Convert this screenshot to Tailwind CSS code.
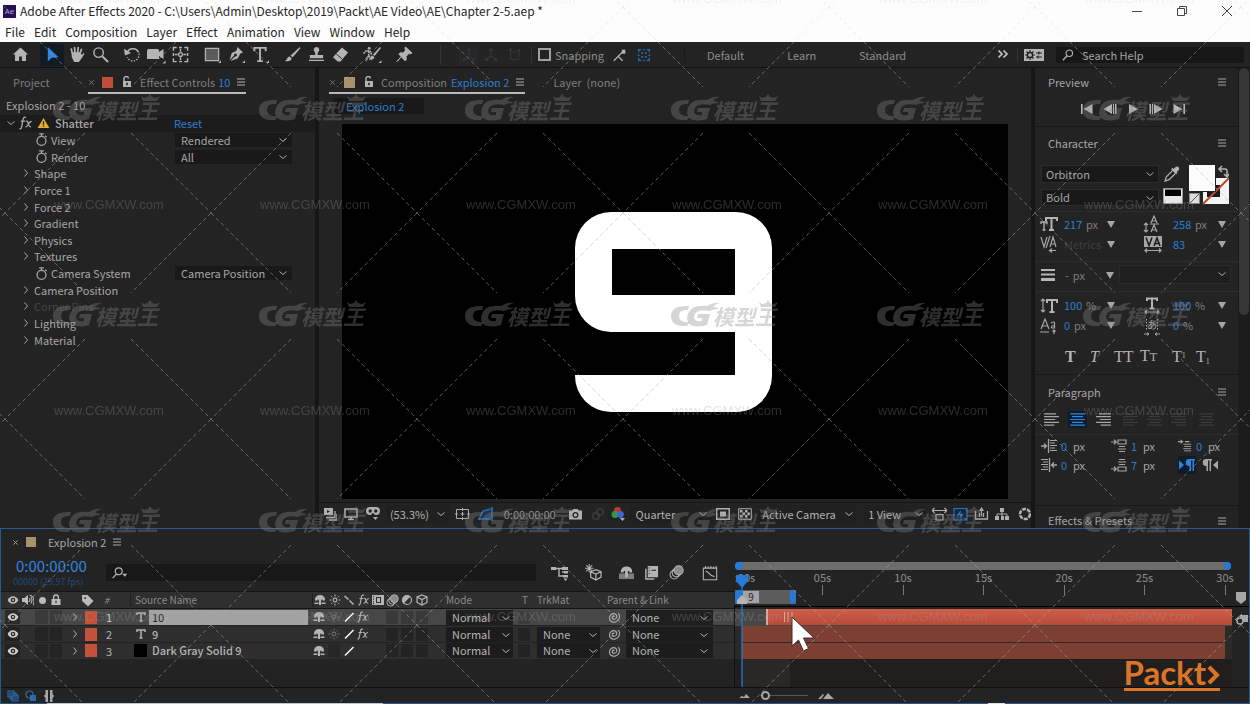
<!DOCTYPE html>
<html lang="en">
<head>
<meta charset="utf-8">
<title>Adobe After Effects 2020</title>
<script src="https://cdn.jsdelivr.net/npm/@tailwindcss/browser@4"></script>
</head>
<body class="bg-[#161616]">

<!-- Icon library -->
<svg class="hidden" aria-hidden="true">
  <symbol id="menu" viewBox="0 0 10 10"><path d="M1 2h8M1 5h8M1 8h8" stroke="currentColor" stroke-width="1.200"/></symbol>
  <symbol id="close" viewBox="0 0 8 8"><path d="M1.500 1.500l5 5M6.500 1.500l-5 5" stroke="currentColor"/></symbol>
  <symbol id="down" viewBox="0 0 10 10"><path d="M1.500 3.500L5 6.500l3.500-3" fill="none" stroke="currentColor"/></symbol>
  <symbol id="right" viewBox="0 0 10 10"><path d="M3.500 1.500L6.500 5l-3 3.500" fill="none" stroke="currentColor"/></symbol>
  <symbol id="tri" viewBox="0 0 8 8"><path d="M0 1h8L4 8z" fill="currentColor"/></symbol>
  <symbol id="lockopen" viewBox="0 0 12 12"><path d="M3 5V3.200a2 2 0 0 1 4.500-.8" fill="none" stroke="currentColor" stroke-width="1.400"/><path fill-rule="evenodd" d="M2 5h8v6H2zM5.200 6.800v2.400h1.600V6.800z" fill="currentColor"/></symbol>
  <symbol id="lock" viewBox="0 0 12 12"><path d="M3.700 5V3.300a2.300 2.300 0 0 1 4.600 0V5" fill="none" stroke="currentColor" stroke-width="1.400"/><path fill-rule="evenodd" d="M1.500 5h9v6h-9zM5.400 6.800v2.200h1.200V6.800z" fill="currentColor"/></symbol>
  <symbol id="home" viewBox="0 0 18 18"><path d="M9 1.500L1 9h2.200v7H7.500v-5h3v5h4.300V9H17z" fill="currentColor"/></symbol>
  <symbol id="arrow" viewBox="0 0 18 18"><path d="M4 1v15.500l4-4 7.500-.7z" fill="currentColor"/></symbol>
  <symbol id="hand" viewBox="0 0 18 18"><path d="M4.500 7.500L3.500 3.200M7.300 7L7 1.800M10.200 7l.6-5.200M12.700 8l1.500-4.500" stroke="currentColor" stroke-width="1.800" stroke-linecap="round"/><path d="M3.700 6.500h9.700l1 3 1.800-1.700c.9-.5 1.500.3 1 1L13 15l-1.500 2H6.500L4 12z" fill="currentColor"/></symbol>
  <symbol id="zoomer" viewBox="0 0 18 18"><circle cx="7" cy="7" r="5" fill="none" stroke="currentColor" stroke-width="1.500"/><path d="M11 11l6 6" stroke="currentColor" stroke-width="2.200"/></symbol>
  <symbol id="rotate" viewBox="0 0 18 18"><path d="M3 8.500A6.500 6.500 0 0 1 15.500 7" fill="none" stroke="currentColor" stroke-width="1.500"/><path d="M15.800 8a6.500 6.500 0 0 1-12.300 4" fill="none" stroke="currentColor" stroke-width="1.400" stroke-dasharray="1.500 1.500"/><path d="M0 3l1 7 6.500-2.500z" fill="currentColor"/></symbol>
  <symbol id="cam" viewBox="0 0 20 18"><path d="M1 4.500q0-1.500 1.500-1.500h9q1.500 0 1.500 1.500V6l4.500-3v10L13 10v3H1z" fill="currentColor"/><path d="M19.500 14.500v3h-3z" fill="currentColor"/></symbol>
  <symbol id="pan" viewBox="0 0 18 18"><path d="M1.500 5V1.500H5M7.500 1.500h3M13 1.500h3.500V5M16.500 7.500v3M16.500 13v3.500H13M10.500 16.500h-3M5 16.500H1.500V13M1.500 10.500v-3" fill="none" stroke="currentColor" stroke-width="1.500"/><circle cx="9" cy="9" r="2" fill="none" stroke="currentColor" stroke-width="1.400"/><path d="M9 3v3M9 12v3M3 9h3M12 9h3" stroke="currentColor" stroke-width="1.500"/></symbol>
  <symbol id="rect" viewBox="0 0 18 18"><path d="M1.500 2.500h14v13h-14z" fill="#5c5c5c" stroke="currentColor" stroke-width="1.300"/><path d="M18 15v3h-3z" fill="currentColor"/></symbol>
  <symbol id="pen" viewBox="0 0 18 18"><path d="M10 1l6 6-3 1-2.500 5L2.500 16 7.500 11a1.500 1.500 0 1 0-1-1L1.700 15 4 7.500l5-2.500z" fill="currentColor"/><path d="M18 15v3h-3z" fill="currentColor"/></symbol>
  <symbol id="type" viewBox="0 0 18 18"><path d="M2.500 5.500v-3.500h12v3.500M8.500 2v14M5.500 16h6" fill="none" stroke="currentColor" stroke-width="2"/><path d="M18 15v3h-3z" fill="currentColor"/></symbol>
  <symbol id="brush" viewBox="0 0 18 18"><path d="M16.800 1L7 10l2 2.200L17.300 2.500zM6 11c-3 0-2 3.500-5 4.500 3 1.500 7 .5 7-2.500z" fill="currentColor"/></symbol>
  <symbol id="stamp" viewBox="0 0 18 18"><path d="M9 1a3 3 0 0 1 2 5.200c-.7 1-.8 2-.7 3.300H16V13H2V9.500h5.700c.1-1.300 0-2.300-.7-3.300A3 3 0 0 1 9 1zM1 14.500h16V16H1z" fill="currentColor"/></symbol>
  <symbol id="eraser" viewBox="0 0 18 18"><path d="M10.500 1.500l6.500 5.500-8 9.500H6L1 12z" fill="currentColor"/><path d="M4.500 8.500l6 5" stroke="#232323"/></symbol>
  <symbol id="roto" viewBox="0 0 20 18"><circle cx="7" cy="2.500" r="1.500" fill="currentColor"/><path d="M1 8l3-3 4 .5 1.500 3.500M6.500 5.500V10l-3 6M6.500 10l3 5" fill="none" stroke="currentColor" stroke-width="1.700" stroke-dasharray="2 .6"/><path d="M18.500 1L11 9l1.700 1.700L19.500 2zM10.500 10c-2 0-1.500 3-4 4 3 1 6 0 6-2zM20 15v3h-3z" fill="currentColor"/></symbol>
  <symbol id="pin" viewBox="0 0 18 18"><path d="M10 1l7 6.500-2 .8-1.500-.4-2.800 3.200.2 3.400-1.500 1L3 8.500l1.300-1.300 3.500.2L10 4.500 9.500 2.500zM5.300 11.500L1 16.500z" fill="currentColor" stroke="currentColor"/></symbol>
  <symbol id="axis" viewBox="0 0 18 18"><path d="M9 2v8M9 10l-6 5M9 10l6 5M7 4l2-2.500L11 4M3 12v3h3M12 15h3v-3" fill="none" stroke="currentColor" stroke-width="1.500"/></symbol>
  <symbol id="axisbox" viewBox="0 0 18 18"><path d="M4 2v12h10M6 7l8-4-1 9M2 4l2-2 2 2" fill="none" stroke="currentColor" stroke-width="1.500"/></symbol>
  <symbol id="snap" viewBox="0 0 18 18"><path d="M2 15.500l5-5 5 5M7 10.500l5-5" fill="none" stroke="currentColor" stroke-width="1.500"/><path d="M11 3h4v4.500h-4z" fill="currentColor"/></symbol>
  <symbol id="snapgrid" viewBox="0 0 18 18"><path d="M3 6V3h3M12 3h3v3M15 12v3h-3M6 15H3v-3" fill="none" stroke="currentColor" stroke-width="1.500"/><path d="M6 6h2v2H6zM10 6h2v2h-2zM6 10h2v2H6zM10 10h2v2h-2zM8.500 2h1.500v2H8.500zM8.500 14h1.500v2H8.500zM2 8.500h2V10H2zM14 8.500h2V10h-2z" fill="currentColor"/></symbol>
  <symbol id="search" viewBox="0 0 14 14"><circle cx="8.500" cy="5" r="3.800" fill="none" stroke="currentColor" stroke-width="1.300"/><path d="M6 8l-5 5" stroke="currentColor" stroke-width="1.600"/></symbol>
  <symbol id="fx" viewBox="0 0 14 14"><path d="M7 1.500c-2.500-1-2.800 1-3.200 3.500L2.600 11c-.3 1.500-1 2-2.100 1.600M1.700 5.200h4.600M7 5.200c1.500-.5 1.700.5 2.500 3s1 2.800 2.500 2.500M12.800 5.300C11 5 10 7 9.200 8.500S7.700 11 6.500 11" fill="none" stroke="currentColor" stroke-width="1.300"/></symbol>
  <symbol id="warn" viewBox="0 0 14 12"><path d="M7 0l7 12H0z" fill="#e3ae35"/><path d="M7 4v4M7 9v1.500" stroke="#232323" stroke-width="1.500"/></symbol>
  <symbol id="watch" viewBox="0 0 14 14"><circle cx="7" cy="8.500" r="4.800" fill="none" stroke="currentColor" stroke-width="1.400"/><path d="M4.500 1h5M7 1v2.500M11 3l1.500 1.200" stroke="currentColor" stroke-width="1.400"/></symbol>
  <symbol id="eye" viewBox="0 0 12 10"><path fill-rule="evenodd" d="M6 1.200C3.500 1.200 1.500 3 .6 5 1.500 7 3.500 8.800 6 8.800S10.500 7 11.400 5C10.500 3 8.500 1.200 6 1.200zM6 2.700a2.300 2.300 0 1 1 0 4.600 2.300 2.300 0 0 1 0-4.600z" fill="currentColor"/><circle cx="6" cy="5" r="1" fill="currentColor"/></symbol>
  <symbol id="speaker" viewBox="0 0 12 12"><path d="M0 4h2.500L6 1v10L2.500 8H0z" fill="currentColor"/><path d="M7.500 4q1.300 2 0 4M9 2.500q2.300 3.500 0 7M7.500 1q6 1 4 10" fill="none" stroke="currentColor"/></symbol>
  <symbol id="tag" viewBox="0 0 12 12"><path fill-rule="evenodd" d="M1 1h5l5.500 5.500-5 5L1 6.500zM3 3v1.500h1.500V3z" fill="currentColor"/></symbol>
  <symbol id="shy" viewBox="0 0 12 12"><path d="M1 6.500V5.500a5 4.500 0 0 1 10 0v1H8.500V5.500h-1v1h-3v-1h-1v1zM5 6h2v5H5zM.5 8.500h4V10h-4zM7.500 8.500h4V10h-4z" fill="currentColor"/></symbol>
  <symbol id="sun" viewBox="0 0 12 12"><circle cx="6" cy="6" r="1.900" fill="none" stroke="currentColor" stroke-width="1.100"/><path d="M6 .5v2M6 9.500v2M.5 6h2M9.500 6h2M2.200 2.200l1.200 1.200M8.600 8.600l1.200 1.200M9.800 2.200L8.600 3.400M3.400 8.600L2.200 9.800" stroke="currentColor"/></symbol>
  <symbol id="slash" viewBox="0 0 12 12"><path d="M2 10.500L10.500 2" stroke="currentColor" stroke-width="1.400"/></symbol>
  <symbol id="backslash" viewBox="0 0 12 12"><path d="M1.500 2l4 3.500M6.500 6.500l4 4" stroke="currentColor" stroke-width="1.600"/></symbol>
  <symbol id="film" viewBox="0 0 12 12"><path fill-rule="evenodd" d="M0 1h12v10H0zM1 2v1.300h1V2zm0 2.500v1.300h1V4.500zM1 7v1.300h1V7zm0 2v1.200h1V9zM4 3v6h5V3zM5 4h3v4H5z" fill="currentColor"/></symbol>
  <symbol id="blur" viewBox="0 0 14 14"><circle cx="5" cy="9" r="4" fill="none" stroke="currentColor"/><circle cx="7" cy="7" r="4" fill="none" stroke="currentColor"/><circle cx="9" cy="5" r="4.200" fill="#8a8a8a" stroke="currentColor"/></symbol>
  <symbol id="adjust" viewBox="0 0 12 12"><circle cx="6" cy="6" r="4.500" fill="none" stroke="currentColor" stroke-width="1.200"/><path d="M9.200 2.800A4.500 4.500 0 0 0 2.800 9.200z" fill="currentColor"/></symbol>
  <symbol id="cube" viewBox="0 0 12 12"><path d="M6 1l5 2v5.500L6 11 1 8.500V3zM1 3l5 2.500L11 3M6 5.500V11" fill="none" stroke="currentColor" stroke-width="1.200"/></symbol>
  <symbol id="spiral" viewBox="0 0 14 14"><path d="M7.500 6.500c-1-1-2.500 0-2.200 1.500.5 2 4 1.500 4.500-1C10.200 4 7 2.800 4.500 4.300 2 6 1.800 9.500 4 11.300c2.500 1.800 6.500.8 8-2.300.8-2 .8-4-.5-6" fill="none" stroke="currentColor" stroke-width="1.100"/></symbol>
  <symbol id="flow" viewBox="0 0 18 16"><path d="M0 2h5v3H0z" fill="currentColor"/><path d="M4 3.500h8M8 3.500V11h6M11 7h3" fill="none" stroke="currentColor" stroke-width="1.400"/><path d="M11 2h6v3h-6zM13 6h4v2.500h-4zM12 10h5v2.500h-5zM12.500 13.500h4L14.500 16z" fill="currentColor"/></symbol>
  <symbol id="draft" viewBox="0 0 18 18"><path d="M4.500 0v9M0 4.500h9M1.300 1.300l6.400 6.400M7.700 1.300L1.300 7.700" stroke="currentColor" stroke-width="1.100"/><path d="M11.500 6l5.500 2.200v5.600L11.500 17 6 13.800V8.200zM6 8.200l5.500 2.500L17 8.200M11.500 10.700V17" fill="none" stroke="currentColor" stroke-width="1.300"/></symbol>
  <symbol id="shybig" viewBox="0 0 18 16"><path d="M1 9h16v6H1z" fill="#7d7d7d"/><path d="M3 8V6.500a6 5 0 0 1 12 0V8h-3V6.500h-1.500V13h-3V6.500H6V8z" fill="currentColor"/></symbol>
  <symbol id="blend" viewBox="0 0 16 16"><path d="M2 4v11h9" fill="none" stroke="currentColor" stroke-width="1.500"/><path fill-rule="evenodd" d="M4 1h11v12H4zM5 2.500v1.200h1V2.500zm0 3v1.200h1V5.500zm0 3v1.200h1V8.500zM8 5v1h5V5z" fill="currentColor"/></symbol>
  <symbol id="graph" viewBox="0 0 18 18"><path d="M1.500 3.500h15v13h-15zM4 1v2.500M7 1.800v1.700M10 1v2.500M13 1.800v1.700M16 1v2.500" fill="none" stroke="currentColor" stroke-width="1.200"/><path d="M4 7c4 0 4 6 10 6" fill="none" stroke="currentColor" stroke-width="1.300"/></symbol>
  <symbol id="play" viewBox="0 0 14 12"><path d="M3 1l9 5-9 5z" fill="currentColor"/></symbol>
  <symbol id="first" viewBox="0 0 14 12"><path d="M1 1h1.600v10H1zM12.500 1v10l-9-5z" fill="currentColor"/></symbol>
  <symbol id="last" viewBox="0 0 14 12"><path d="M11.400 1H13v10h-1.600zM1.500 1v10l9-5z" fill="currentColor"/></symbol>
  <symbol id="prev" viewBox="0 0 14 12"><path d="M9 1v10L.5 6zM10 1h1v10h-1zM12 1h1.500v10H12z" fill="currentColor"/></symbol>
  <symbol id="next" viewBox="0 0 14 12"><path d="M5 1v10l8.500-5zM3 1h1v10H3zM.5 1H2v10H.5z" fill="currentColor"/></symbol>
  <symbol id="lines" viewBox="0 0 16 14"><path d="M0 1h16M2 4h12M0 7h16M2 10h12M0 13h16" stroke="currentColor" stroke-width="1.300"/></symbol>
  <symbol id="linesL" viewBox="0 0 16 14"><path d="M0 1h13M0 4h16M0 7h12M0 10h16M0 13h11" stroke="currentColor" stroke-width="1.300"/></symbol>
  <symbol id="linesR" viewBox="0 0 16 14"><path d="M3 1h13M0 4h16M4 7h12M0 10h16M5 13h11" stroke="currentColor" stroke-width="1.300"/></symbol>
  <symbol id="indL" viewBox="0 0 16 14"><path d="M0 7h5M3 4.500L5.500 7 3 9.500M7.500 0v14" fill="none" stroke="currentColor" stroke-width="1.300"/><path d="M9 1.500h7M9 4h5M9 6.500h7M9 9h5M9 11.500h7" stroke="currentColor"/></symbol>
  <symbol id="indR" viewBox="0 0 16 14"><path d="M16 7h-5M13 4.500L10.500 7 13 9.500M8.500 0v14" fill="none" stroke="currentColor" stroke-width="1.300"/><path d="M0 1.500h7M2 4h5M0 6.500h7M2 9h5M0 11.500h7" stroke="currentColor"/></symbol>
  <symbol id="spB" viewBox="0 0 16 14"><path d="M0 3h5M3 .8L5.300 3 3 5.200M7 1h8v4H7z" fill="none" stroke="currentColor" stroke-width="1.200"/><path d="M8 7.500h6M7 10h8M8 12.500h6" stroke="currentColor"/></symbol>
  <symbol id="spA" viewBox="0 0 16 14"><path d="M0 11h5M3 8.800L5.300 11 3 13.200M7 9h8v4H7z" fill="none" stroke="currentColor" stroke-width="1.200"/><path d="M8 1.500h6M7 4h8M8 6.500h6" stroke="currentColor"/></symbol>
  <symbol id="indF" viewBox="0 0 16 14"><path d="M0 2h5M3 0l2.300 2L3 4M8 2h5" fill="none" stroke="currentColor" stroke-width="1.200"/><path d="M6 5h9M7 7.500h8M6 10h9M7 12.500h8" stroke="currentColor"/></symbol>
  <symbol id="drop" viewBox="0 0 18 18"><path d="M12 2.500c2-2.500 5.500.5 3.500 3l-2 2 .8.800-1.500 1.500L7.500 4.500 9 3l1 1.200z" fill="currentColor"/><path d="M9 6l-6.500 6.500L1 17l4.500-1.500L12 9" fill="none" stroke="currentColor" stroke-width="1.300"/></symbol>
</svg>

<div class="relative flex h-screen flex-col overflow-hidden font-['Noto_Sans_CJK_SC','Noto_Sans',sans-serif] text-[11px] leading-[16px] text-[#a6a6a6]">

  <!-- Title bar and menus -->
  <header class="shrink-0 bg-[#fdfdfd] text-[12px] text-[#262626]">
    <div class="flex h-[22px] items-center">
      <span class="ml-[3px] mr-1 flex size-[13px] items-center justify-center bg-[#24104c] font-['Open_Sans',sans-serif] text-[8px] text-[#b9a2f0]">Ae</span>
      <h1 class="whitespace-nowrap">Adobe After Effects 2020 - C:\Users\Admin\Desktop\2019\Packt\AE Video\AE\Chapter 2-5.aep *</h1>
      <div class="ml-auto flex gap-[31px] pr-4 text-[#444]">
        <button aria-label="Minimize"><svg class="size-[14px]" viewBox="0 0 14 14"><path d="M2 7.500h10" stroke="currentColor"/></svg></button>
        <button aria-label="Restore"><svg class="size-[14px]" viewBox="0 0 14 14"><path d="M2.500 4.500h7v7h-7zM4.500 4.500v-2h7v7h-2" fill="none" stroke="currentColor"/></svg></button>
        <button aria-label="Close"><svg class="size-[14px]" viewBox="0 0 14 14"><path d="M2 2l10 10M12 2L2 12" stroke="currentColor"/></svg></button>
      </div>
    </div>
    <nav class="flex h-5 items-center gap-[9px] pl-[5px]">
      <button>File</button><button>Edit</button><button>Composition</button><button>Layer</button><button>Effect</button><button>Animation</button><button>View</button><button>Window</button><button>Help</button>
    </nav>
  </header>

  <!-- Tools -->
  <div class="flex h-[26px] shrink-0 items-center gap-2 border-b border-[#111] bg-[#232323] pl-2 text-[#b4b4b4]">
    <button class="flex w-6 justify-center" aria-label="Home"><svg class="size-[17px]"><use href="#home"/></svg></button>
    <div class="flex items-center">
      <button class="flex h-[22px] w-6 items-center justify-center bg-[#121a24] text-[#2f86e0]" aria-label="Selection"><svg class="size-[17px]"><use href="#arrow"/></svg></button>
      <button class="flex w-6 justify-center" aria-label="Hand"><svg class="size-[17px]"><use href="#hand"/></svg></button>
      <button class="flex w-6 justify-center" aria-label="Zoom"><svg class="size-[17px]"><use href="#zoomer"/></svg></button>
    </div>
    <div class="flex">
      <button class="flex w-6 justify-center" aria-label="Rotation"><svg class="size-[17px]"><use href="#rotate"/></svg></button>
      <button class="flex w-6 justify-center" aria-label="Camera"><svg class="h-[18px] w-5"><use href="#cam"/></svg></button>
      <button class="flex w-6 justify-center" aria-label="Pan behind"><svg class="size-[17px]"><use href="#pan"/></svg></button>
    </div>
    <div class="flex">
      <button class="flex w-6 justify-center" aria-label="Rectangle"><svg class="size-[17px]"><use href="#rect"/></svg></button>
      <button class="flex w-6 justify-center" aria-label="Pen"><svg class="size-[17px]"><use href="#pen"/></svg></button>
      <button class="flex w-6 justify-center" aria-label="Type"><svg class="size-[17px]"><use href="#type"/></svg></button>
    </div>
    <div class="flex">
      <button class="flex w-6 justify-center" aria-label="Brush"><svg class="size-[17px]"><use href="#brush"/></svg></button>
      <button class="flex w-6 justify-center" aria-label="Clone stamp"><svg class="size-[17px]"><use href="#stamp"/></svg></button>
      <button class="flex w-6 justify-center" aria-label="Eraser"><svg class="size-[17px]"><use href="#eraser"/></svg></button>
    </div>
    <button class="flex w-6 justify-center" aria-label="Roto brush"><svg class="h-[17px] w-5"><use href="#roto"/></svg></button>
    <button class="flex w-6 justify-center" aria-label="Puppet pin"><svg class="size-[17px]"><use href="#pin"/></svg></button>
    <div class="ml-4 flex h-5 items-center border-l border-[#343434] pl-[18px] text-[#343434]">
      <span class="flex size-5 items-center justify-center bg-[#25252a]"><svg class="size-4"><use href="#axis"/></svg></span>
      <svg class="mr-2 ml-1 size-4"><use href="#axis"/></svg>
      <svg class="size-4"><use href="#axisbox"/></svg>
    </div>
    <label class="flex items-center gap-1 border-l border-[#343434] pl-1.5 text-[#8c8c8c]"><input type="checkbox" class="size-[13px] appearance-none border-2 border-[#a0a0a0]">Snapping</label>
    <button class="flex w-4 justify-center" aria-label="Snap edges"><svg class="size-4"><use href="#snap"/></svg></button>
    <button class="flex w-4 justify-center text-[#2b6cad]" aria-label="Snap grid"><svg class="size-[18px]"><use href="#snapgrid"/></svg></button>
    <nav class="ml-6 flex gap-[43px] border-l border-[#1a1a1a] pl-[22px] text-[#8c8c8c]">
      <button>Default</button><button>Learn</button><button>Standard</button>
    </nav>
    <button class="ml-auto" aria-label="More workspaces"><svg class="h-3 w-3 text-[#c4c4c4]" viewBox="0 0 12 12"><path d="M1.500 1.500L5 5 1.500 8.500M6.500 1.500L10 5 6.500 8.500" fill="none" stroke="currentColor" stroke-width="1.700"/></svg></button>
    <button class="border-l border-[#343434] pl-1.5" aria-label="Workspace settings"><svg class="h-3 w-5" viewBox="0 0 20 12"><path d="M0 0h20v12H0z" fill="currentColor"/><circle cx="6" cy="6" r="2.600" fill="none" stroke="#232323" stroke-width="1.500"/><path d="M6 1v2M6 9v2M1 6h2M9 6h2M2.500 2.500L4 4M8 8l1.500 1.500M9.500 2.500L8 4M4 8L2.500 9.500M12 4h6M12 8h6M15 2.500v3M14 6.500v3" stroke="#232323" stroke-width="1.200"/></svg></button>
    <label class="mr-1.5 ml-1 flex h-4 w-[188px] items-center gap-2 bg-[#171717] pl-1.5"><svg class="size-3 shrink-0"><use href="#search"/></svg><input type="text" class="w-full bg-transparent outline-none placeholder:text-[#a4a4a4]" placeholder="Search Help" aria-label="Search Help"></label>
  </div>

  <main class="flex min-h-0 flex-1 gap-1">
    <!-- Effect controls -->
    <section class="flex w-[315px] shrink-0 flex-col bg-[#232323]">
      <div class="flex h-7 items-center">
        <button class="w-[88px] pl-[13px] text-left text-[#7e7e7e]">Project</button>
        <div class="flex h-[26px] items-center self-start border-b-2 border-[#b8b8b8] pt-1 text-[#7e7e7e]">
          <button class="mr-1.5" aria-label="Close tab"><svg class="size-[7px]"><use href="#close"/></svg></button>
          <span class="mr-2 ml-px size-[11px] bg-[#bd4e38]"></span>
          <svg class="mr-[7px] size-3 text-[#b4b4b4]"><use href="#lockopen"/></svg>
          <span>Effect Controls</span><span class="ml-[3px] text-[#2d7cd0]">10</span>
          <button class="ml-1.5 text-[#b4b4b4]" aria-label="Panel menu"><svg class="size-[10px]"><use href="#menu"/></svg></button>
        </div>
      </div>
      <p class="h-[19px] pl-[6px] leading-[19px]">Explosion 2 - 10</p>
      <div class="grid h-[233px] auto-rows-fr items-stretch whitespace-nowrap">
        <div class="flex items-center bg-[#1c1c1c] pl-1.5"><svg class="mr-[3px] size-[10px]"><use href="#down"/></svg><svg class="mr-1 size-[14px]"><use href="#fx"/></svg><svg class="mr-[5px] h-[10px] w-[13px]"><use href="#warn"/></svg><span class="w-[119px] font-medium">Shatter</span><button class="text-[#2d7cd0]">Reset</button></div>
        <div class="flex items-center pl-[35px]"><svg class="mr-[3px] size-[13px]"><use href="#watch"/></svg><label for="view" class="w-[124px]">View</label><span class="relative flex w-[117px]"><select id="view" class="h-[14px] w-full appearance-none bg-[#191919] pl-1.5 leading-[14px]"><option>Rendered</option></select><svg class="pointer-events-none absolute top-0.5 right-1 size-[10px]"><use href="#down"/></svg></span></div>
        <div class="flex items-center pl-[35px]"><svg class="mr-[3px] size-[13px]"><use href="#watch"/></svg><label for="render" class="w-[124px]">Render</label><span class="relative flex w-[117px]"><select id="render" class="h-[14px] w-full appearance-none bg-[#191919] pl-1.5 leading-[14px]"><option>All</option></select><svg class="pointer-events-none absolute top-0.5 right-1 size-[10px]"><use href="#down"/></svg></span></div>
        <button class="flex items-center gap-[3px] pl-[21px]"><svg class="size-[10px]"><use href="#right"/></svg>Shape</button>
        <button class="flex items-center gap-[3px] pl-[21px]"><svg class="size-[10px]"><use href="#right"/></svg>Force 1</button>
        <button class="flex items-center gap-[3px] pl-[21px]"><svg class="size-[10px]"><use href="#right"/></svg>Force 2</button>
        <button class="flex items-center gap-[3px] pl-[21px]"><svg class="size-[10px]"><use href="#right"/></svg>Gradient</button>
        <button class="flex items-center gap-[3px] pl-[21px]"><svg class="size-[10px]"><use href="#right"/></svg>Physics</button>
        <button class="flex items-center gap-[3px] pl-[21px]"><svg class="size-[10px]"><use href="#right"/></svg>Textures</button>
        <div class="flex items-center pl-[35px]"><svg class="mr-[3px] size-[13px]"><use href="#watch"/></svg><label for="camsys" class="w-[124px]">Camera System</label><span class="relative flex w-[117px]"><select id="camsys" class="h-[14px] w-full appearance-none bg-[#191919] pl-1.5 leading-[14px]"><option>Camera Position</option></select><svg class="pointer-events-none absolute top-0.5 right-1 size-[10px]"><use href="#down"/></svg></span></div>
        <button class="flex items-center gap-[3px] pl-[21px]"><svg class="size-[10px]"><use href="#right"/></svg>Camera Position</button>
        <button class="flex items-center gap-[3px] pl-[21px]"><svg class="size-[10px]"><use href="#right"/></svg><span class="text-[#444]">Corner Pins</span></button>
        <button class="flex items-center gap-[3px] pl-[21px]"><svg class="size-[10px]"><use href="#right"/></svg>Lighting</button>
        <button class="flex items-center gap-[3px] pl-[21px]"><svg class="size-[10px]"><use href="#right"/></svg>Material</button>
      </div>
    </section>

    <!-- Composition viewer -->
    <section class="flex min-w-0 flex-1 flex-col overflow-hidden bg-[#232323]">
      <div class="flex h-7 shrink-0 items-center pl-[10px] text-[#7e7e7e]">
        <div class="flex h-[26px] items-center self-start border-b-2 border-[#b8b8b8] pt-1">
          <button class="mr-2" aria-label="Close tab"><svg class="size-[7px]"><use href="#close"/></svg></button>
          <span class="mr-2 size-[11px] bg-[#a8926c]"></span>
          <svg class="mr-1.5 size-3 text-[#b4b4b4]"><use href="#lockopen"/></svg>
          <span>Composition</span><span class="ml-1 text-[#2d7cd0]">Explosion 2</span>
          <button class="ml-1.5 text-[#b4b4b4]" aria-label="Panel menu"><svg class="size-[10px]"><use href="#menu"/></svg></button>
        </div>
        <button class="ml-7 whitespace-pre">Layer  (none)</button>
      </div>
      <div class="flex h-7 shrink-0 items-start pt-0.5 pl-[14px]"><a href="#" class="bg-[#181818] pr-5 pl-[13px] text-[#2d7cd0]">Explosion 2</a></div>
      <div class="flex min-h-0 flex-1 justify-center">
        <div class="flex aspect-video h-full items-center justify-center bg-black pr-1">
          <!-- Rendered figure nine -->
          <div role="img" aria-label="9" class="flex w-[197px] flex-col">
            <div class="h-[120px] rounded-tl-[36px] rounded-tr-[36px] rounded-bl-[36px] border-[37px] border-white"></div>
            <div class="h-[80px] rounded-br-[36px] rounded-bl-[36px] border-r-[37px] border-b-[37px] border-white"></div>
          </div>
        </div>
      </div>
      <div class="mt-[3px] flex h-[26px] shrink-0 items-center border-t border-[#151515] pb-[3px] text-[#b0b0b0]">
        <svg class="ml-1 h-[14px] w-[14px]" viewBox="0 0 14 14"><path d="M1 1h9v7H1z" fill="currentColor"/><path d="M4 3l3 1.500L4 6z" fill="#222"/><path d="M3 10.500h9V4M6 13h8V7" fill="none" stroke="currentColor" stroke-width="1.300"/></svg>
        <svg class="ml-[7px] size-[14px]" viewBox="0 0 14 14"><path d="M1 2h12v8H1zM4 12.500h6M7 10v2" fill="none" stroke="currentColor" stroke-width="1.500"/></svg>
        <svg class="ml-[7px] h-[16px] w-[16px]" viewBox="0 0 16 16"><path fill-rule="evenodd" d="M1 5a4 4 0 0 1 4-4h6a4 4 0 0 1 0 8c-2 0-2-2-3-2s-1 2-3 2a4 4 0 0 1-4-4zm2.500 0a1.700 1.700 0 1 0 3.400 0 1.700 1.700 0 0 0-3.400 0zm5.600 0a1.700 1.700 0 1 0 3.400 0 1.700 1.700 0 0 0-3.400 0zM8 11h5l-2.500 3z" fill="currentColor"/></svg>
        <span class="relative ml-[5px] flex w-16"><select aria-label="Magnification" class="h-[18px] w-full appearance-none bg-[#202020] pl-1 leading-[18px]"><option>(53.3%)</option></select><svg class="pointer-events-none absolute top-1 right-1 size-[10px]"><use href="#down"/></svg></span>
        <svg class="ml-[5px] size-[15px]" viewBox="0 0 15 15"><path d="M1.500 2.500h12v9h-12zM7.500 1v3M7.500 10v3M0 7h3M12 7h3M7.500 5v4M5.500 7h4" fill="none" stroke="currentColor"/></svg>
        <svg class="ml-2 size-[15px] text-[#2f6fb5]" viewBox="0 0 15 15"><path d="M1 12L5 4l9-2.500V12z" fill="#1c3350" stroke="currentColor" stroke-width="1.300"/><path d="M0 12h2M13 1h2v2h-2M13 11h2v2h-2" stroke="currentColor" stroke-width="1.500"/></svg>
        <button class="ml-[11px] text-[#8e8e8e]">0:00:00:00</button>
        <svg class="ml-3 h-[13px] w-[15px]" viewBox="0 0 15 13"><path fill-rule="evenodd" d="M1 2.500h3L5.500 1h4L11 2.500h3v9H1zM7.500 4a3 3 0 1 0 0 6 3 3 0 0 0 0-6z" fill="currentColor"/><circle cx="7.500" cy="7" r="1.700" fill="currentColor"/></svg>
        <svg class="ml-2 size-[14px] text-[#3c3c3c]" viewBox="0 0 14 14"><circle cx="5" cy="9" r="3.300" fill="none" stroke="currentColor" stroke-width="1.500"/><circle cx="9" cy="5" r="3.300" fill="none" stroke="currentColor" stroke-width="1.500"/></svg>
        <svg class="ml-1.5 h-4 w-[15px]" viewBox="0 0 15 16"><circle cx="6.500" cy="4.500" r="3.400" fill="#c8352c"/><circle cx="4" cy="8.500" r="3.400" fill="#2f9a3c"/><circle cx="9.500" cy="8.500" r="3.400" fill="#3767d6"/><path d="M9 12h5l-2.500 3z" fill="currentColor"/></svg>
        <span class="relative ml-1 flex w-[83px]"><select aria-label="Resolution" class="h-[18px] w-full appearance-none bg-[#202020] pl-1.5 leading-[18px]"><option>Quarter</option></select><svg class="pointer-events-none absolute top-1 right-1 size-[10px]"><use href="#down"/></svg></span>
        <svg class="ml-1 h-3 w-[14px]" viewBox="0 0 14 12"><path d="M.7.700h12.600v10.600H.7z" fill="none" stroke="currentColor" stroke-width="1.400"/><path d="M4 3.500h6v5H4z" fill="currentColor"/></svg>
        <svg class="ml-2 h-3 w-[14px]" viewBox="0 0 14 12"><path d="M.7.700h12.600v10.600H.7z" fill="none" stroke="currentColor"/><path d="M2 2h2.500v2.500H2zM7 2h2.500v2.500H7zM4.500 4.500H7V7H4.500zM9.500 4.500H12V7H9.500zM2 7h2.500v2.500H2zM7 7h2.500v2.500H7z" fill="currentColor"/></svg>
        <span class="relative ml-1.5 flex w-[98px]"><select aria-label="3D view" class="h-[18px] w-full appearance-none bg-[#202020] pl-1 leading-[18px]"><option>Active Camera</option></select><svg class="pointer-events-none absolute top-1 right-0.5 size-[10px]"><use href="#down"/></svg></span>
        <span class="relative ml-2 flex w-[64px]"><select aria-label="View layout" class="h-[18px] w-full appearance-none bg-[#202020] pl-1 leading-[18px]"><option>1 View</option></select><svg class="pointer-events-none absolute top-1 right-1 size-[10px]"><use href="#down"/></svg></span>
        <svg class="ml-1 size-[15px]" viewBox="0 0 15 15"><path d="M0 3.500h15M2.500 1L0 3.500 2.500 6M12.500 1L15 3.500 12.500 6M4 7.500h7V13H4z" fill="none" stroke="currentColor" stroke-width="1.200"/></svg>
        <svg class="ml-1.5 size-[15px] text-[#2f6fb5]" viewBox="0 0 15 15"><path d="M1 1.500h13V13H1z" fill="#152a42" stroke="currentColor" stroke-width="1.200"/><path d="M8 3L4 8h3l-1 4 4-5H7.500zM10 11h4v3z" fill="currentColor"/></svg>
        <svg class="ml-1.5 size-[15px]" viewBox="0 0 15 15"><path d="M1.500 4v8h12V4M5.500 6v4M9.500 6v4" fill="none" stroke="currentColor" stroke-width="1.300"/><path d="M5 4l2.500-4L10 4zM7 3h1v6H7z" fill="currentColor"/></svg>
        <svg class="ml-1.5 size-[14px]" viewBox="0 0 14 14"><path d="M5 1h4v4H5zM0 9h4v4H0zM10 9h4v4h-4zM6 9h3v4H6z" fill="currentColor"/><path d="M7 5v4M2 9V7h10v2" fill="none" stroke="currentColor"/></svg>
        <svg class="ml-2 size-[14px] shrink-0" viewBox="0 0 14 14"><circle cx="8" cy="7" r="5" fill="none" stroke="currentColor" stroke-width="2.500" stroke-dasharray="4 1"/></svg>
      </div>
    </section>

    <!-- Right dock -->
    <aside class="flex w-[215px] shrink-0 overflow-hidden bg-[#232323]">
      <div class="min-w-0 flex-1">
        <div class="flex h-7 items-center pr-[11px] pl-[13px]"><h2 class="flex-1">Preview</h2><svg class="size-[10px]"><use href="#menu"/></svg></div>
        <div class="flex h-[31px] justify-center gap-[9px] border-b border-[#191919] pt-[7px] pr-2 text-[#b8b8b8]">
          <button class="h-3" aria-label="First frame"><svg class="h-3 w-[14px]"><use href="#first"/></svg></button><button class="h-3" aria-label="Previous frame"><svg class="h-3 w-[14px]"><use href="#prev"/></svg></button><button class="h-3" aria-label="Play"><svg class="h-3 w-[14px]"><use href="#play"/></svg></button><button class="h-3" aria-label="Next frame"><svg class="h-3 w-[14px]"><use href="#next"/></svg></button><button class="h-3" aria-label="Last frame"><svg class="h-3 w-[14px]"><use href="#last"/></svg></button>
        </div>
        <div class="flex h-8 items-center pr-[11px] pl-[13px]"><h2 class="flex-1">Character</h2><svg class="size-[10px]"><use href="#menu"/></svg></div>

        <div class="flex gap-1 border-b border-[#2d2d2d] pt-1 pb-[5px] pl-1.5">
          <div class="flex flex-col gap-[6px] pt-0.5">
            <span class="relative flex w-[118px]"><select aria-label="Font family" class="h-[18px] w-full appearance-none border border-[#2b2b2b] bg-[#191919] pl-1 leading-[16px]"><option>Orbitron</option></select><svg class="pointer-events-none absolute top-1 right-1 size-[10px]"><use href="#down"/></svg></span>
            <span class="relative flex w-[118px]"><select aria-label="Font style" class="h-[17px] w-full appearance-none border border-[#2b2b2b] bg-[#191919] pl-1 leading-[15px]"><option>Bold</option></select><svg class="pointer-events-none absolute top-1 right-1 size-[10px]"><use href="#down"/></svg></span>
          </div>
          <svg class="h-[42px] w-[66px]" viewBox="0 0 66 42"><use href="#drop" x="1" y="2" width="17" height="17" class="text-[#b4b4b4]"/><path d="M.5 25.500h19v15h-19z" fill="#e8e8e8" stroke="#999"/><path d="M2 26.500h16v6.500H2z" fill="#000"/><path d="M40 15h26v26H40z" fill="#f4f4f4"/><path d="M44 22h13v12H44z" fill="#191919"/><path d="M40 41L66 15" stroke="#b84a30" stroke-width="2"/><path d="M25.500 1.500h27v27h-27z" fill="#fcfcfc" stroke="#222"/><path d="M26.500 30.500h10v10h-10z" fill="#ddd" stroke="#888"/><path d="M27 40l9-9" stroke="#555"/><path d="M57 6h5q2 0 2 2v5M59 3l-3 3 3 3M61 11l3 3 2-3" fill="none" stroke="#b4b4b4" stroke-width="1.500"/></svg>
        </div>

        <div class="grid auto-rows-[20px] grid-cols-[24px_22px_17px_40px_30px_22px_19px_16px] items-center border-b border-[#2d2d2d] pt-0.5 pb-[7px] pl-[5px] [&_input]:w-full [&_input]:bg-transparent [&_input]:text-[#2d7cd0]">
          <svg class="h-4 w-[18px]" viewBox="0 0 18 16"><path d="M1 8V6h6v2M4 6v8M2.500 14h3" fill="none" stroke="#b4b4b4" stroke-width="1.300"/><path d="M6 5V2h11v3M11.500 2v12M9 14h5" fill="none" stroke="#b4b4b4" stroke-width="2"/></svg>
          <input aria-label="Font size" value="217"><span class="text-[#7e7e7e]">px</span><svg class="m-1 size-2"><use href="#tri"/></svg>
          <svg class="h-[18px] w-[18px]" viewBox="0 0 18 18"><path d="M3 8v9M1 10l2-2 2 2M1 15l2 2 2-2M8 8l3-7 3 7M9 6h4M8 17l3-7 3 7M9 15h4M7 9h9" fill="none" stroke="#a6a6a6" stroke-width="1.200"/></svg>
          <input aria-label="Leading" value="258"><span class="text-[#7e7e7e]">px</span><svg class="m-1 size-2"><use href="#tri"/></svg>

          <svg class="h-[18px] w-[18px]" viewBox="0 0 18 18"><path d="M1 2l3 10 3-10M10 12l3-10 3 10M11 9h4M10 1L6 13M16 15.500h-6M12 13.500l-2.500 2 2.500 2" fill="none" stroke="#a6a6a6" stroke-width="1.200"/></svg>
          <span class="col-span-2 text-[#3e3e3e]">Metrics</span><svg class="m-1 size-2"><use href="#tri"/></svg>
          <svg class="h-[18px] w-[20px]" viewBox="0 0 20 18"><path d="M1 1h18v11H1z" fill="#a6a6a6"/><path d="M3 2.500l3 8 3-8M11 11l3-8 3 8M12 8.500h4" fill="none" stroke="#1c1c1c" stroke-width="1.500"/><path d="M2 15.500h16M4 13.500l-2 2 2 2M16 13.500l2 2-2 2" fill="none" stroke="#a6a6a6" stroke-width="1.200"/></svg>
          <input aria-label="Tracking" value="83"><span></span><svg class="m-1 size-2"><use href="#tri"/></svg>
        </div>

        <div class="grid grid-cols-[24px_37px_15px_1fr] items-center border-b border-[#2d2d2d] pt-[3px] pb-[7px] pr-[7px] pl-[6px]">
          <svg class="h-3 w-[14px]" viewBox="0 0 14 12"><path d="M0 1h14M0 5.500h14" stroke="#b4b4b4" stroke-width="2"/><path d="M0 10.500h14" stroke="#b4b4b4" stroke-width="3"/></svg>
          <span class="text-[#7e7e7e]"><span class="mr-1">-</span>px</span><svg class="ml-1 size-2"><use href="#tri"/></svg>
          <span class="relative ml-0.5 flex"><select aria-label="Stroke order" class="h-[19px] w-full appearance-none border border-[#2b2b2b] bg-[#1f1f1f]"><option></option></select><svg class="pointer-events-none absolute top-1 right-1 size-[10px]"><use href="#down"/></svg></span>
        </div>

        <div class="grid auto-rows-[20px] grid-cols-[24px_22px_17px_40px_30px_22px_19px_16px] items-center pt-[3px] pl-[5px] [&_input]:w-full [&_input]:bg-transparent [&_input]:text-[#2d7cd0]">
          <svg class="h-[17px] w-[18px]" viewBox="0 0 18 17"><path d="M3 2v13M1 4l2-2 2 2M1 13l2 2 2-2" fill="none" stroke="#a6a6a6" stroke-width="1.200"/><path d="M7 6V3h10v3M12 3v12M9.500 15h5" fill="none" stroke="#b4b4b4" stroke-width="2"/></svg>
          <input aria-label="Vertical scale" value="100"><span class="text-[#7e7e7e]">%</span><svg class="m-1 size-2"><use href="#tri"/></svg>
          <svg class="h-[17px] w-[18px]" viewBox="0 0 18 17"><path d="M4 4V1.500h10V4M9 1.500v10M6.500 11.500h5" fill="none" stroke="#b4b4b4" stroke-width="2"/><path d="M2 15h14M4 13l-2 2 2 2M14 13l2 2-2 2" fill="none" stroke="#a6a6a6" stroke-width="1.200"/></svg>
          <input aria-label="Horizontal scale" value="100"><span class="text-[#7e7e7e]">%</span><svg class="m-1 size-2"><use href="#tri"/></svg>
          <svg class="h-[17px] w-[18px]" viewBox="0 0 18 17"><path d="M1 12L5 2l4 10M2.500 9h5M0 15h9M11 6q3-2 3.500 0v5h-2.500q-2-2 2.500-2.500M14 17v-4M12.500 14.500L14 13l1.500 1.500" fill="none" stroke="#a6a6a6" stroke-width="1.200"/></svg>
          <span class="col-span-2 flex"><input aria-label="Baseline shift" value="0" class="max-w-[10px]"><span class="text-[#7e7e7e]">px</span></span><svg class="m-1 size-2"><use href="#tri"/></svg>
          <span class="relative flex w-[18px] justify-center"><span class="text-[10px] leading-[14px]">あ</span><svg class="absolute inset-0 h-[18px] w-[18px]" viewBox="0 0 18 18"><path d="M3.500 1v12M14.500 1v12" stroke="#a6a6a6" stroke-dasharray="1.500 1.500"/><path d="M1 16h5M4 14.500L6 16l-2 1.500M17 16h-5M14 14.500L12 16l2 1.500" fill="none" stroke="#a6a6a6"/></svg></span>
          <span class="col-span-2 flex"><input aria-label="Tsume" value="0" class="max-w-[10px]"><span class="text-[#7e7e7e]">%</span></span><svg class="m-1 size-2"><use href="#tri"/></svg>
        </div>

        <div class="mt-1 flex h-9 items-center border-b border-[#191919] pl-[30px] font-['Liberation_Serif',serif] text-[16px] text-[#b4b4b4]">
          <button class="w-[25px] text-left font-bold" aria-label="Faux bold">T</button><button class="w-6 text-left italic" aria-label="Faux italic">T</button><button class="w-[26px] text-left" aria-label="All caps">TT</button><button class="w-[32px] text-left" aria-label="Small caps">T<span class="text-[12px]">T</span></button><button class="w-[24px] text-left" aria-label="Superscript">T<sup class="text-[8px]">1</sup></button><button aria-label="Subscript">T<sub class="text-[8px]">1</sub></button>
        </div>

        <div class="flex h-[33px] items-center pr-[11px] pl-[13px]"><h2 class="flex-1">Paragraph</h2><svg class="size-[10px]"><use href="#menu"/></svg></div>
        <div class="flex h-[27px] items-center gap-[9px] border-b border-[#2d2d2d] pb-1 pl-[9px]">
          <button aria-label="Align left"><svg class="h-[13px] w-[15px]"><use href="#linesL"/></svg></button>
          <button class="bg-[#101c2c] p-0.5 text-[#2f86e0]" aria-label="Align center"><svg class="h-[13px] w-[15px]"><use href="#lines"/></svg></button>
          <button class="mr-[3px]" aria-label="Align right"><svg class="h-[13px] w-[15px]"><use href="#linesR"/></svg></button>
          <svg class="h-[13px] w-[15px] text-[#3a3a3a]"><use href="#linesL"/></svg><svg class="h-[13px] w-[15px] text-[#3a3a3a]"><use href="#lines"/></svg><svg class="h-[13px] w-[15px] text-[#3a3a3a]"><use href="#linesR"/></svg><svg class="ml-1 h-[13px] w-[15px] text-[#3a3a3a]"><use href="#lines"/></svg>
        </div>
        <div class="grid h-[71px] auto-rows-[19px] grid-cols-[70px_67px_1fr] content-start border-b border-[#191919] pt-px pl-1.5 [&_input]:w-2 [&_input]:bg-transparent [&_input]:text-[#2d7cd0]">
          <span class="flex items-center gap-1"><svg class="h-[14px] w-4"><use href="#indL"/></svg><input aria-label="Indent left" value="0">px</span>
          <span class="flex items-center gap-1"><svg class="h-[14px] w-4"><use href="#spB"/></svg><input aria-label="Space before" value="1">px</span>
          <span class="flex items-center gap-1"><svg class="h-[14px] w-[14px]"><use href="#indF"/></svg><input aria-label="First line indent" value="0">px</span>
          <span class="flex items-center gap-1"><svg class="h-[14px] w-4"><use href="#indR"/></svg><input aria-label="Indent right" value="0">px</span>
          <span class="flex items-center gap-1"><svg class="h-[14px] w-4"><use href="#spA"/></svg><input aria-label="Space after" value="7">px</span>
          <span class="flex items-center gap-1.5"><button class="flex size-[18px] items-center justify-center bg-[#101c2c] text-[#2f86e0]" aria-label="Left to right"><svg class="h-3 w-4" viewBox="0 0 16 12"><path d="M0 1.500L5 6 0 10.500zM10 0h6v1.500h-1V12h-1.500V1.500H12V12h-1.500V7a3.500 3.500 0 0 1-.5-7z" fill="currentColor"/></svg></button><button aria-label="Right to left"><svg class="h-3 w-4" viewBox="0 0 16 12"><path d="M16 1.500L11 6l5 4.500zM4 0h6v1.500H9V12H7.500V1.500H6V12H4.500V7A3.500 3.500 0 0 1 4 0z" fill="currentColor"/></svg></button></span>
        </div>
        <div class="flex h-[22px] items-end pr-[11px] pl-[13px]"><h2 class="flex-1">Effects &amp; Presets</h2><svg class="mb-0.5 size-[10px]"><use href="#menu"/></svg></div>
      </div>
      <div class="w-3 bg-[#1c1c1c]"><div class="ml-px h-[247px] w-[10px] rounded-full bg-[#363636]"></div></div>
    </aside>
  </main>

  <!-- Timeline -->
  <section class="flex h-[176px] shrink-0 flex-col border border-[#27598f] bg-[#232323]">
    <div class="flex min-h-0 flex-1">
      <div class="flex w-[733px] shrink-0 flex-col">
        <div class="flex h-[26px] items-center pl-[11px]">
          <button class="mr-[7px]" aria-label="Close tab"><svg class="size-[7px]"><use href="#close"/></svg></button>
          <span class="mr-3 size-[10px] bg-[#a8926c]"></span><span>Explosion 2</span><svg class="ml-1.5 size-[10px]"><use href="#menu"/></svg>
        </div>
        <div class="flex h-9 items-start">
          <div class="w-[105px] pl-3"><p class="pl-[3px] text-[15px] leading-[22px] text-[#2f86e0]">0:00:00:00</p><p class="text-[9px] leading-[9px] text-[#1f4a78]">00000 (29.97 fps)</p></div>
          <label class="mt-[9px] flex h-[17px] w-[430px] items-center bg-[#181818] pl-1.5"><svg class="h-3 w-4 shrink-0" viewBox="0 0 18 14"><circle cx="7.500" cy="5" r="4" fill="none" stroke="#b4b4b4" stroke-width="1.400"/><path d="M5 8l-4.500 5" stroke="#b4b4b4" stroke-width="1.600"/><path d="M11.500 8h6l-3 3.500z" fill="#b4b4b4"/></svg><input type="text" class="w-full bg-transparent outline-none" aria-label="Search layers"></label>
          <div class="mt-[9px] ml-[15px] flex items-center text-[#b4b4b4]">
            <svg class="mr-4 h-4 w-[18px]"><use href="#flow"/></svg><svg class="mr-4 size-[17px]"><use href="#draft"/></svg><svg class="mr-[9px] h-[15px] w-[17px]"><use href="#shybig"/></svg><svg class="mr-[10px] size-[15px]"><use href="#blend"/></svg><svg class="mr-[18px] size-[15px]"><use href="#blur"/></svg><svg class="size-4"><use href="#graph"/></svg>
          </div>
        </div>
        <table class="w-full table-fixed border-collapse text-left [&_td]:p-0 [&_th]:p-0 [&_th]:font-normal">
          <colgroup><col class="w-[19px]"><col class="w-[15px]"><col class="w-[15px]"><col class="w-[14px]"><col class="w-[17px]"><col class="w-[19px]"><col class="w-[30px]"><col class="w-[182px]"><col class="w-[134px]"><col class="w-[72px]"><col class="w-[19px]"><col class="w-[70px]"><col></colgroup>
          <thead>
            <tr class="h-[17px] border-y border-[#151515] bg-[#2f2f2f] text-[10px] leading-[14px] text-[#8a8a8a]">
              <th><svg class="ml-1.5 h-[10px] w-3 text-[#bbb]" aria-label="Video"><use href="#eye"/></svg></th>
              <th><svg class="ml-0.5 size-3 text-[#bbb]" aria-label="Audio"><use href="#speaker"/></svg></th>
              <th><span class="ml-1 block size-[7px] rounded-full bg-[#bbb]"></span></th>
              <th><svg class="size-3 text-[#bbb]" aria-label="Lock"><use href="#lock"/></svg></th>
              <th></th>
              <th><svg class="size-[13px] text-[#bbb]" aria-label="Label"><use href="#tag"/></svg></th>
              <th class="italic"><span class="pl-1 text-[9px]">#</span></th>
              <th><span class="border-l border-[#1f1f1f] pl-1">Source Name</span></th>
              <th><div class="mr-[17px] grid grid-cols-8 justify-items-center border-l border-[#1f1f1f] text-[#b4b4b4]"><svg class="size-3"><use href="#shy"/></svg><svg class="size-3"><use href="#sun"/></svg><svg class="size-3"><use href="#backslash"/></svg><svg class="size-3"><use href="#fx"/></svg><svg class="size-3"><use href="#film"/></svg><svg class="size-[13px]"><use href="#blur"/></svg><svg class="size-3"><use href="#adjust"/></svg><svg class="size-3"><use href="#cube"/></svg></div></th>
              <th>Mode</th><th><span class="pl-1">T</span></th><th>TrkMat</th><th>Parent &amp; Link</th>
            </tr>
          </thead>
          <tbody class="leading-[14px] text-[#b4b4b4]">
            <tr class="h-[17px] border-b border-[#222] bg-[#474747]">
              <td><span class="ml-1 flex h-[14px] w-[15px] items-center justify-center bg-[#2a2a2a]"><svg class="h-[10px] w-3 text-[#ccc]"><use href="#eye"/></svg></span></td><td></td>
              <td><span class="block h-[14px] w-[13px] bg-[#3a3a3a]"></span></td><td><span class="block h-[14px] w-[12px] bg-[#3a3a3a]"></span></td>
              <td><svg class="ml-1.5 size-[10px]"><use href="#right"/></svg></td><td><span class="ml-1 block h-[13px] w-3 bg-[#c4523a]"></span></td><td><span class="pl-[6px] text-[#ccc]">1</span></td>
              <td><div class="flex h-[15px] w-[178px] items-center"><svg class="mr-[3px] ml-1.5 size-[10px]" viewBox="0 0 10 10"><path d="M1 3V1h8v2M5 1v8M3.500 9h3" fill="none" stroke="currentColor" stroke-width="1.500"/></svg><span class="h-[15px] flex-1 bg-[#a3a3a3] pl-[3px] leading-[15px] text-[#222]">10</span></div></td>
              <td><div class="mr-[17px] grid grid-cols-8 items-center justify-items-center"><svg class="size-3"><use href="#shy"/></svg><svg class="size-3 text-[#6e6e6e]"><use href="#sun"/></svg><svg class="size-3 text-white"><use href="#slash"/></svg><svg class="size-3"><use href="#fx"/></svg><i></i><i class="h-[13px] w-3 bg-[#393939]"></i><i class="h-[13px] w-3 bg-[#393939]"></i><i class="h-[13px] w-3 bg-[#393939]"></i></div></td>
              <td><span class="relative flex w-[67px]"><select aria-label="Mode of layer 1" class="h-[15px] w-full appearance-none bg-[#1f1f1f] pl-1.5 leading-[15px]"><option>Normal</option></select><svg class="pointer-events-none absolute top-[3px] right-0.5 size-[10px]"><use href="#down"/></svg></span></td>
              <td><i class="block h-[13px] w-3 bg-[#3c3c3c]"></i></td><td></td>
              <td><div class="flex items-center"><svg class="mr-[5px] size-[14px]"><use href="#spiral"/></svg><span class="relative flex w-[87px]"><select aria-label="Parent of layer 1" class="h-[15px] w-full appearance-none bg-[#1f1f1f] pl-1.5 leading-[15px]"><option>None</option></select><svg class="pointer-events-none absolute top-[3px] right-1 size-[10px]"><use href="#down"/></svg></span></div></td>
            </tr>
            <tr class="h-[17px] border-b border-[#222] bg-[#2e2e2e]">
              <td><span class="ml-1 flex h-[14px] w-[15px] items-center justify-center bg-[#222]"><svg class="h-[10px] w-3 text-[#ccc]"><use href="#eye"/></svg></span></td><td></td>
              <td><span class="block h-[14px] w-[13px] bg-[#242424]"></span></td><td><span class="block h-[14px] w-[12px] bg-[#242424]"></span></td>
              <td><svg class="ml-1.5 size-[10px]"><use href="#right"/></svg></td><td><span class="ml-1 block h-[13px] w-3 bg-[#c4523a]"></span></td><td><span class="pl-[6px]">2</span></td>
              <td><div class="flex h-[15px] w-[178px] items-center"><svg class="mr-[3px] ml-1.5 size-[10px]" viewBox="0 0 10 10"><path d="M1 3V1h8v2M5 1v8M3.500 9h3" fill="none" stroke="currentColor" stroke-width="1.500"/></svg><span class="pl-[3px] leading-[15px] font-medium">9</span></div></td>
              <td><div class="mr-[17px] grid grid-cols-8 items-center justify-items-center"><svg class="size-3"><use href="#shy"/></svg><svg class="size-3 text-[#6e6e6e]"><use href="#sun"/></svg><svg class="size-3 text-white"><use href="#slash"/></svg><svg class="size-3"><use href="#fx"/></svg><i></i><i class="h-[13px] w-3 bg-[#232323]"></i><i class="h-[13px] w-3 bg-[#232323]"></i><i class="h-[13px] w-3 bg-[#232323]"></i></div></td>
              <td><span class="relative flex w-[67px]"><select aria-label="Mode of layer 2" class="h-[15px] w-full appearance-none bg-[#1c1c1c] pl-1.5 leading-[15px]"><option>Normal</option></select><svg class="pointer-events-none absolute top-[3px] right-0.5 size-[10px]"><use href="#down"/></svg></span></td>
              <td><i class="block h-[13px] w-3 bg-[#232323]"></i></td>
              <td><span class="relative flex w-[63px]"><select aria-label="Track matte of layer 2" class="h-[15px] w-full appearance-none bg-[#1c1c1c] pl-1.5 leading-[15px]"><option>None</option></select><svg class="pointer-events-none absolute top-[3px] right-0.5 size-[10px]"><use href="#down"/></svg></span></td>
              <td><div class="flex items-center"><svg class="mr-[5px] size-[14px]"><use href="#spiral"/></svg><span class="relative flex w-[87px]"><select aria-label="Parent of layer 2" class="h-[15px] w-full appearance-none bg-[#1c1c1c] pl-1.5 leading-[15px]"><option>None</option></select><svg class="pointer-events-none absolute top-[3px] right-1 size-[10px]"><use href="#down"/></svg></span></div></td>
            </tr>
            <tr class="h-4 bg-[#2e2e2e]">
              <td><span class="ml-1 flex h-[14px] w-[15px] items-center justify-center bg-[#222]"><svg class="h-[10px] w-3 text-[#ccc]"><use href="#eye"/></svg></span></td><td></td>
              <td><span class="block h-[14px] w-[13px] bg-[#242424]"></span></td><td><span class="block h-[14px] w-[12px] bg-[#242424]"></span></td>
              <td><svg class="ml-1.5 size-[10px]"><use href="#right"/></svg></td><td><span class="ml-1 block h-[13px] w-3 bg-[#c4523a]"></span></td><td><span class="pl-[6px]">3</span></td>
              <td><div class="flex h-[15px] w-[178px] items-center"><span class="mr-[5px] ml-1 size-[13px] bg-black"></span><span class="leading-[15px] font-medium whitespace-nowrap">Dark Gray Solid 9</span></div></td>
              <td><div class="mr-[17px] grid grid-cols-8 items-center justify-items-center"><svg class="size-3"><use href="#shy"/></svg><i class="h-[13px] w-3 bg-[#262626]"></i><svg class="size-3 text-white"><use href="#slash"/></svg><i></i><i></i><i class="h-[13px] w-3 bg-[#232323]"></i><i class="h-[13px] w-3 bg-[#232323]"></i><i class="h-[13px] w-3 bg-[#232323]"></i></div></td>
              <td><span class="relative flex w-[67px]"><select aria-label="Mode of layer 3" class="h-[15px] w-full appearance-none bg-[#1c1c1c] pl-1.5 leading-[15px]"><option>Normal</option></select><svg class="pointer-events-none absolute top-[3px] right-0.5 size-[10px]"><use href="#down"/></svg></span></td>
              <td><i class="block h-[13px] w-3 bg-[#232323]"></i></td>
              <td><span class="relative flex w-[63px]"><select aria-label="Track matte of layer 3" class="h-[15px] w-full appearance-none bg-[#1c1c1c] pl-1.5 leading-[15px]"><option>None</option></select><svg class="pointer-events-none absolute top-[3px] right-0.5 size-[10px]"><use href="#down"/></svg></span></td>
              <td><div class="flex items-center"><svg class="mr-[5px] size-[14px]"><use href="#spiral"/></svg><span class="relative flex w-[87px]"><select aria-label="Parent of layer 3" class="h-[15px] w-full appearance-none bg-[#1c1c1c] pl-1.5 leading-[15px]"><option>None</option></select><svg class="pointer-events-none absolute top-[3px] right-1 size-[10px]"><use href="#down"/></svg></span></div></td>
            </tr>
          </tbody>
        </table>
      </div>

      <!-- Time graph -->
      <div class="relative flex min-w-0 flex-1 flex-col">
        <div class="mt-[33px] mr-[18px] ml-px flex h-2 justify-between rounded-full bg-[#6c6c6c]"><span class="w-[7px] rounded-l-full bg-[#2579d8]"></span><span class="w-1.5 rounded-r-full bg-[#2579d8]"></span></div>
        <div class="mr-6 ml-2 flex h-[20px] justify-between leading-[15px] text-[#8e8e8e] [&>span]:flex [&>span]:w-0 [&>span]:flex-col [&>span]:items-center [&_i]:h-[10px] [&_i]:w-px [&_i]:shrink-0 [&_i]:bg-[#777]">
          <span><b class="ml-1.5 font-normal">:00s</b></span><span>05s<i></i></span><span>10s<i></i></span><span>15s<i></i></span><span>20s<i></i></span><span>25s<i></i></span><span>30s<i></i></span>
        </div>
        <div class="flex h-[17px] items-start border-b border-black pl-px">
          <div class="flex h-[14px] w-[61px] bg-[#5c5c5c]"><span class="w-2 rounded-l bg-[#2579d8]"></span><span class="mt-px h-3 w-4 bg-[#a4a4a4] text-center text-[10px] leading-[12px] text-[#222]">9</span><span class="ml-auto w-[6px] rounded-r bg-[#2579d8]"></span></div>
        </div>
        <div class="flex flex-1 flex-col border-l border-[#111] pt-px">
          <div class="mt-px mr-[17px] flex h-[17px] bg-[#474747] pl-[31px]"><div class="h-4 flex-1 border-l-2 border-[#d8a89c] bg-linear-to-b from-[#cf5f4a] to-[#b84a39]"></div></div>
          <div class="mr-[17px] flex h-[17px] bg-[#2c2a29] pr-[7px] pl-[7px]"><div class="h-4 flex-1 bg-[#7e3f33]"></div></div>
          <div class="mr-[17px] flex h-4 bg-[#2c2a29] pr-[7px] pl-[7px]"><div class="h-4 flex-1 bg-[#7e3f33]"></div></div>
          <div class="mr-[17px] flex flex-1 bg-[#211f1e] pl-[7px]"><span class="w-12 bg-[#2a2827]"></span></div>
        </div>

        <!-- Playhead, trim marks, comp marker bin -->
        <svg class="absolute top-[44px] left-px h-[114px] w-4" viewBox="0 0 16 114"><path d="M1 2h12v6l-6 7-6-7z" fill="#2579d8"/><path d="M7 14v100" stroke="#2579d8" stroke-width="1.300"/><path d="M2 31v-4l5-5 5 5v4z" fill="#b4b4b4"/></svg>
        <svg class="absolute top-[83px] left-[49px] h-[10px] w-3" viewBox="0 0 12 10"><path d="M1.500 0v10M5 0v10M9 0v10" stroke="#d8a89c"/></svg>
        <svg class="absolute top-[62px] right-px h-9 w-[14px]" viewBox="0 0 14 36"><path d="M2 1h10v8l-5 4-5-4z" fill="#a6a6a6"/><path d="M6 24h8v7H6z" fill="#a6a6a6"/><path d="M1 29l7-6" stroke="#a6a6a6"/><circle cx="6" cy="30" r="3" fill="#232323" stroke="#a6a6a6" stroke-width="1.500"/></svg>
      </div>
    </div>
    <div class="flex h-4 shrink-0 items-center border-t border-[#0f0f0f]">
      <div class="flex w-[738px] gap-1.5 pl-1.5 text-[#2b6cad]">
        <svg class="size-3" viewBox="0 0 12 12"><path d="M1 1h6v6H1zM3 3h6v6H3zM5 5h6v6H5z" fill="#232323" stroke="currentColor" stroke-width="1.200"/></svg>
        <svg class="size-3" viewBox="0 0 12 12"><circle cx="4.500" cy="4.500" r="3.500" fill="none" stroke="currentColor" stroke-width="1.200"/><path d="M5 5h6v6H5z" fill="currentColor"/></svg>
        <svg class="size-3 text-[#a6a6a6]" viewBox="0 0 12 12"><path d="M5 0H2.500v4L1 6l1.500 2v4H5zM7 0h2.500v4L11 6 9.500 8v4H7z" fill="currentColor"/></svg>
      </div>
      <svg class="h-2 w-[11px] text-[#a6a6a6]" viewBox="0 0 11 8"><path d="M0 6l3-2 2 1 2-3 4 4z" fill="currentColor"/></svg>
      <input type="range" min="0" max="100" value="2" aria-label="Timeline zoom" class="mx-[10px] h-px w-[48px] appearance-none bg-[#555] [&::-webkit-slider-thumb]:size-[9px] [&::-webkit-slider-thumb]:appearance-none [&::-webkit-slider-thumb]:rounded-full [&::-webkit-slider-thumb]:border-2 [&::-webkit-slider-thumb]:border-[#a6a6a6] [&::-webkit-slider-thumb]:bg-[#232323]">
      <svg class="h-2 w-4 text-[#a6a6a6]" viewBox="0 0 16 8"><path d="M0 7l5-5 1 1-3 4zM5 7l5-6 6 6z" fill="currentColor"/></svg>
    </div>
  </section>

  <!-- Progress strip along the window's lower edge -->
  <div class="absolute bottom-0 left-[47px] h-px w-[336px] bg-[#b9c6dc]"></div>
  <div class="absolute right-[245px] bottom-0 h-px w-[17px] bg-[#d8dde6]"></div>

  <!-- Publisher logo -->
  <div class="absolute right-[30px] bottom-[13px] flex items-center border-b-[3px] border-[#dc7427] font-['Lato',sans-serif] text-[33px] leading-[31px] font-bold text-[#dc7427]">Packt<svg class="mt-1 h-5 w-[14px]" viewBox="0 0 14 20"><path d="M3 2l8 8-8 8" fill="none" stroke="currentColor" stroke-width="4"/></svg></div>

  <!-- Pointer -->
  <svg class="pointer-events-none absolute top-[615px] left-[790px] h-[38px] w-7" viewBox="0 0 28 38"><path d="M2 2v29l6.500-6 5 11 5-2.500-5-10.500H24z" fill="#fff" stroke="#3a2a28"/></svg>

  <!-- Tiled watermark -->
  <svg class="pointer-events-none absolute inset-0 size-full" aria-hidden="true">
    <defs>
      <pattern id="wm" x="5" y="7" width="206" height="206" patternUnits="userSpaceOnUse">
        <path d="M0 0L80 80M126 126L206 206M206 0L126 80M80 126L0 206" stroke="#aaa" stroke-opacity=".5" stroke-dasharray="4 3"/>
        <g fill="#888" fill-opacity=".34">
          <path d="M66 93q-18-1-18 10t16 10l3-4q-11 1-11-6t9-6z"/>
          <path d="M64 106q1-15 20-13 6-4 13-3-5 1-7 4 4 0 6 2-6 0-9 2-15-3-16 6 0 5 8 4v-3h-5l1-4h12l-3 11q-18 5-20-6z"/>
          <path d="M136 89l3 2 4-1 2-3 2 3 4 1 4-2-3 5h-14z"/>
          <text x="90" y="112" font-family="Noto Sans CJK SC" font-weight="700" font-size="21" font-style="italic">模型王</text>
        </g>
        <text x="49" y="202" font-family="Liberation Sans" font-size="13" fill="#999" fill-opacity=".28">www.CGMXW.com</text>
      </pattern>
    </defs>
    <rect width="100%" height="42" fill="url(#wm)" opacity=".4"/>
    <rect y="42" width="100%" height="100%" fill="url(#wm)"/>
  </svg>
</div>
</body>
</html>
